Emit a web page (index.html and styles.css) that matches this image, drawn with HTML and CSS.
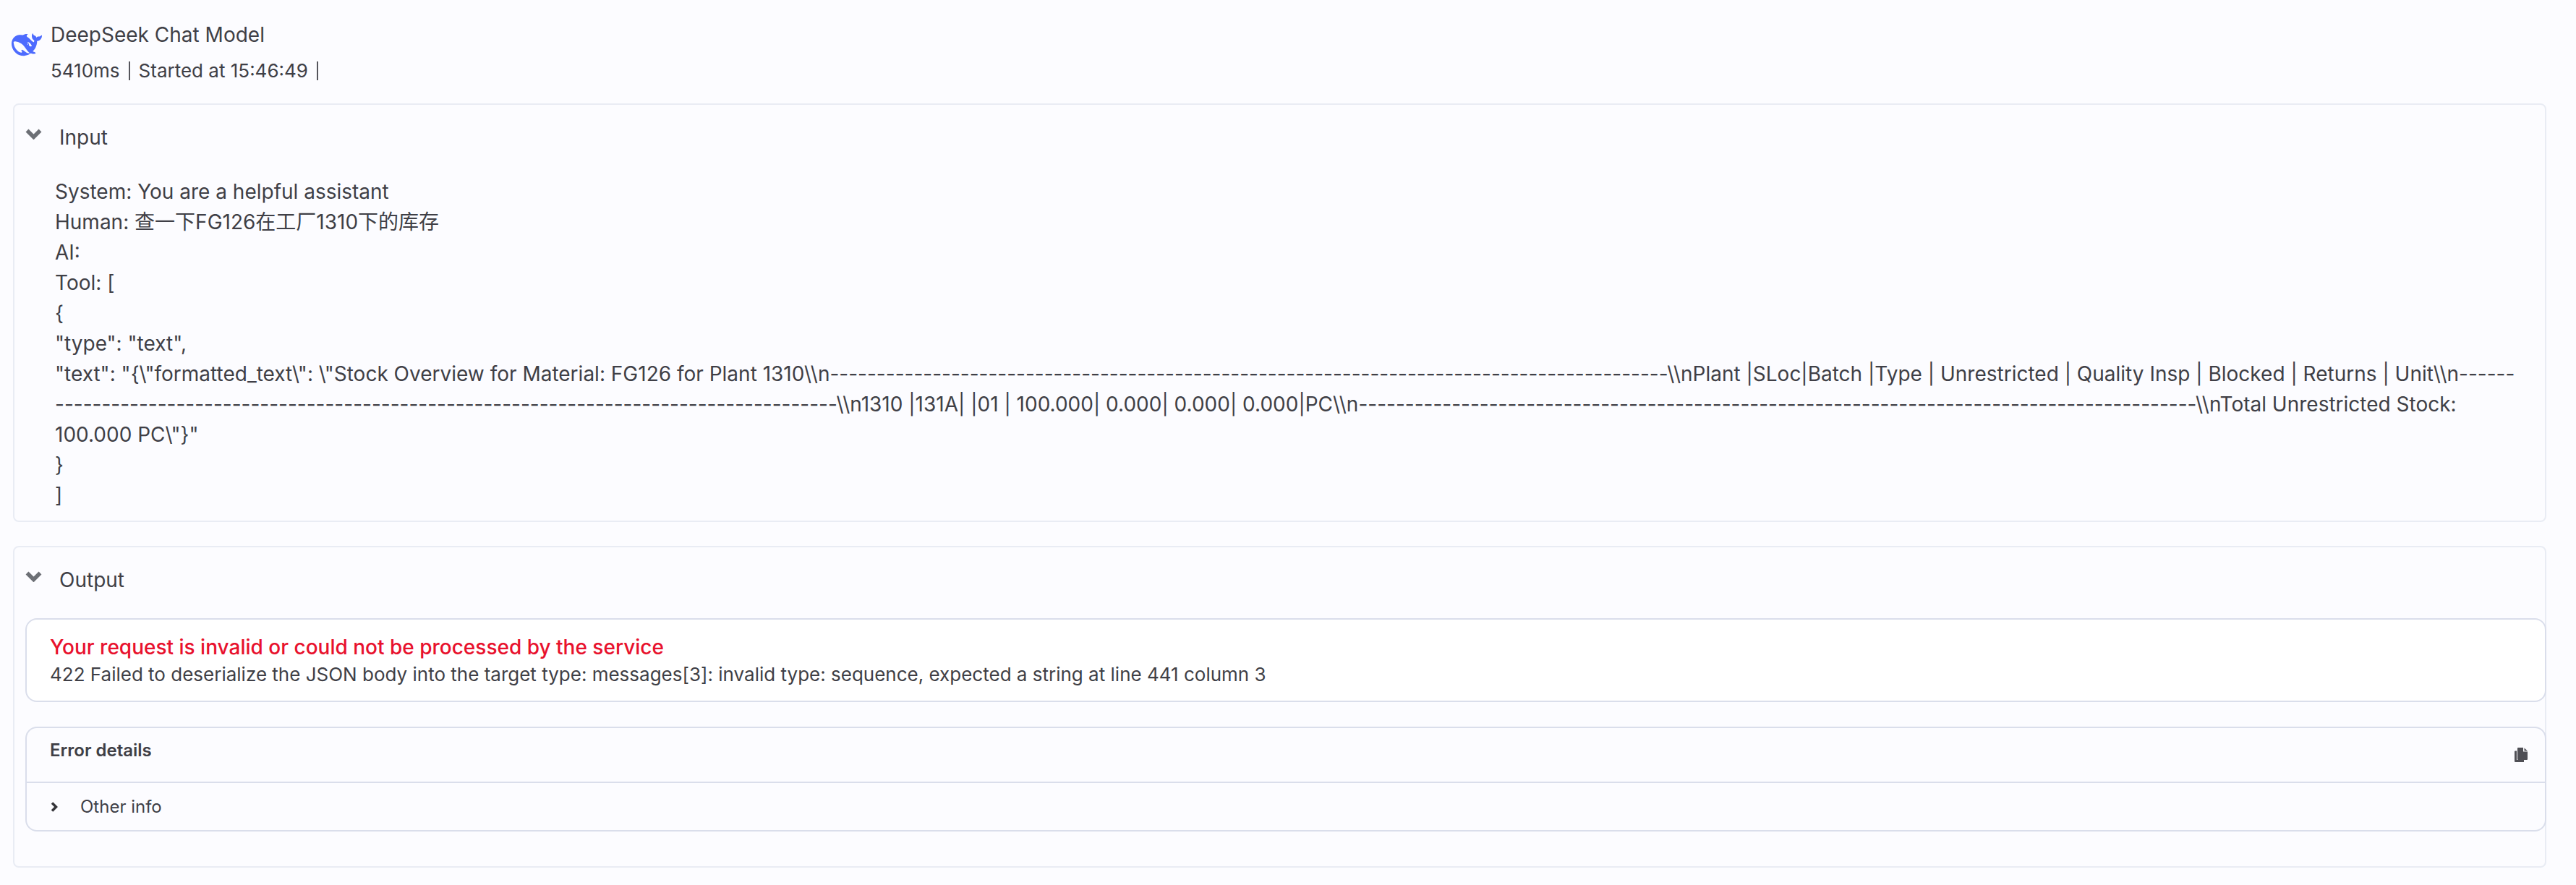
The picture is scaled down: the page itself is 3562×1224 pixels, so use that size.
FILE: index.html
```html
<!DOCTYPE html>
<html lang="en">
<head>
<meta charset="utf-8">
<title>DeepSeek Chat Model</title>
<link rel="stylesheet" href="styles.css">
</head>
<body>
<header class="head">
  <svg class="logo" viewBox="0 0 24 24"><path fill="#4d6bfe" d="M23.748 4.482c-.254-.124-.364.113-.512.234-.051.039-.094.09-.137.136-.372.397-.806.657-1.373.626-.829-.046-1.537.214-2.163.848-.133-.782-.575-1.248-1.247-1.548-.352-.156-.708-.311-.955-.65-.172-.241-.219-.51-.305-.774-.055-.16-.11-.323-.293-.35-.2-.031-.278.136-.356.276-.313.572-.434 1.202-.422 1.84.027 1.436.633 2.58 1.838 3.393.137.093.172.187.129.323-.082.28-.18.552-.266.833-.055.179-.137.217-.329.14a5.526 5.526 0 01-1.736-1.18c-.857-.828-1.631-1.742-2.597-2.458a11.365 11.365 0 00-.689-.471c-.985-.957.13-1.743.388-1.836.27-.098.093-.432-.779-.428-.872.004-1.67.295-2.687.684a3.055 3.055 0 01-.465.137 9.597 9.597 0 00-2.883-.102c-1.885.21-3.39 1.102-4.497 2.623C.082 8.606-.231 10.684.152 12.85c.403 2.284 1.569 4.175 3.36 5.653 1.858 1.533 3.997 2.284 6.438 2.14 1.482-.085 3.133-.284 4.994-1.86.47.234.962.327 1.78.397.63.059 1.236-.03 1.705-.128.735-.156.684-.837.419-.961-2.155-1.004-1.682-.595-2.113-.926 1.096-1.296 2.746-2.642 3.392-7.003.05-.347.007-.565 0-.845-.004-.17.035-.237.23-.256a4.173 4.173 0 001.545-.475c1.396-.763 1.96-2.015 2.093-3.517.02-.23-.004-.467-.247-.588zM11.581 18c-2.089-1.642-3.102-2.183-3.52-2.16-.392.024-.321.471-.235.763.09.288.207.486.371.739.114.167.192.416-.113.603-.673.416-1.842-.14-1.897-.167-1.361-.802-2.5-1.86-3.301-3.307-.774-1.393-1.224-2.887-1.298-4.482-.02-.386.093-.522.477-.592a4.696 4.696 0 011.529-.039c2.132.312 3.946 1.265 5.468 2.774.868.86 1.525 1.887 2.202 2.891.72 1.066 1.494 2.082 2.48 2.914.348.292.625.514.891.677-.802.09-2.14.11-3.054-.614zm1-6.44a.306.306 0 01.415-.287.302.302 0 01.2.288.306.306 0 01-.31.307.303.303 0 01-.304-.308zm3.11 1.596c-.2.081-.399.151-.59.16a1.245 1.245 0 01-.798-.254c-.274-.23-.47-.358-.552-.758a1.73 1.73 0 01.016-.588c.07-.327-.008-.537-.239-.727-.187-.156-.426-.199-.688-.199a.559.559 0 01-.254-.078c-.11-.054-.2-.19-.114-.358.028-.054.16-.186.192-.21.356-.202.767-.136 1.146.016.352.144.618.408 1.001.782.391.451.462.576.685.914.176.265.336.537.445.848.067.195-.019.354-.25.452z"/></svg>
  <div class="head-text">
    <div class="title">DeepSeek Chat Model</div>
    <div class="meta">5410ms<span class="sep"></span>Started at 15:46:49<span class="sep"></span></div>
  </div>
</header>

<section class="card card-input">
  <div class="card-head">
    <svg class="chev" viewBox="0 0 23 15"><path d="M2.500 2.500l9 9 9-9"/></svg>
    <span>Input</span>
  </div>
  <div class="prompt">System: You are a helpful assistant
Human: 查一下FG126在工厂1310下的库存
AI:
Tool: [
{
"type": "text",
"text": "{\"formatted_text\": \"Stock Overview for Material: FG126 for Plant 1310\\n------------------------------------------------------------------------------------------\\nPlant |SLoc|Batch |Type | Unrestricted | Quality Insp | Blocked | Returns | Unit\\n------------------------------------------------------------------------------------------\\n1310 |131A| |01 | 100.000| 0.000| 0.000| 0.000|PC\\n------------------------------------------------------------------------------------------\\nTotal Unrestricted Stock: 100.000 PC\"}"
}
]</div>
</section>

<section class="card card-output">
  <div class="card-head">
    <svg class="chev" viewBox="0 0 23 15"><path d="M2.500 2.500l9 9 9-9"/></svg>
    <span>Output</span>
  </div>
  <div class="error">
    <div class="error-title">Your request is invalid or could not be processed by the service</div>
    <div class="error-text">422 Failed to deserialize the JSON body into the target type: messages[3]: invalid type: sequence, expected a string at line 441 column 3</div>
  </div>
  <div class="details">
    <div class="details-head">
      <span>Error details</span>
      <svg class="copy" viewBox="0 0 18 20"><path d="M0 5.500a1 1 0 0 1 1-1h2V17h10v3H1a1 1 0 0 1-1-1z"/><path d="M5 0h7v5.500h6V16a1 1 0 0 1-1 1H5a1 1 0 0 1-1-1V1a1 1 0 0 1 1-1z"/><path d="M13.500 0.500L18 4.500h-4.500z"/></svg>
    </div>
    <div class="details-row">
      <svg class="chev-small" viewBox="0 0 12 16"><path d="M3 2.500L8.500 8 3 13.500"/></svg>
      <span>Other info</span>
    </div>
  </div>
</section>
</body>
</html>
```
FILE: styles.css
```css
* {
  box-sizing: border-box;
}

html,
body {
  margin: 0;
  background: #fcfcff;
}

body {
  height: 1224px;
  overflow: hidden;
  padding: 27px 41px 0 18px;
  font-family: Inter, "Noto Sans CJK SC", sans-serif;
  font-size: 28px;
  line-height: 42px;
  color: #3f3f46;
}

.head {
  display: flex;
  align-items: flex-start;
  height: 88px;
}

.logo {
  width: 42px;
  height: 42px;
  margin: 14px 12px 0 -2px;
  flex: none;
}

.title {
  height: 42px;
  line-height: 42px;
}

.meta {
  display: flex;
  align-items: center;
  height: 48px;
  margin-top: 5px;
  font-size: 26px;
}

.sep {
  width: 2px;
  height: 26px;
  margin: 0 12px;
  background: #55555c;
}

.card {
  border: 2px solid #e9ecf4;
  border-radius: 8px;
  padding: 0 0 0 15px;
}

.card-input {
  margin-top: 28px;
  height: 579px;
}

.card-output {
  margin-top: 33px;
  height: 445px;
}

.card-head {
  display: flex;
  align-items: center;
  gap: 24px;
  height: 64px;
  margin-top: 13px;
}

.chev {
  width: 23px;
  height: 15px;
  margin-top: -9px;
  flex: none;
  fill: none;
  stroke: #6c6f75;
  stroke-width: 5.500;
}

.prompt {
  margin: 22px 32px 0 41px;
  white-space: pre-wrap;
  overflow-wrap: anywhere;
}

.error {
  margin: 21px -2px 0 0;
  height: 116px;
  padding: 19px 32px 0 32px;
  background: #fff;
  border: 2px solid #dadeeb;
  border-radius: 16px;
}

.error-title {
  height: 38px;
  line-height: 38px;
  color: #e8112d;
  font-weight: 500;
}

.error-text {
  height: 38px;
  line-height: 38px;
  font-size: 26px;
}

.details {
  margin: 34px -2px 0 0;
  height: 145px;
  border: 2px solid #dadeeb;
  border-radius: 16px;
}

.details-head {
  display: flex;
  justify-content: space-between;
  height: 76px;
  padding: 13px 24px 0 32px;
  border-bottom: 2px solid #dadeeb;
  font-size: 24px;
  line-height: 36px;
  font-weight: 600;
}

.copy {
  width: 18px;
  height: 20px;
  margin-top: 14px;
  fill: #4f4f55;
}

.details-row {
  display: flex;
  align-items: center;
  gap: 30px;
  height: 65px;
  padding-left: 32px;
  font-size: 24px;
}

.chev-small {
  width: 12px;
  height: 16px;
  fill: none;
  stroke: #333338;
  stroke-width: 3.500;
}
```
